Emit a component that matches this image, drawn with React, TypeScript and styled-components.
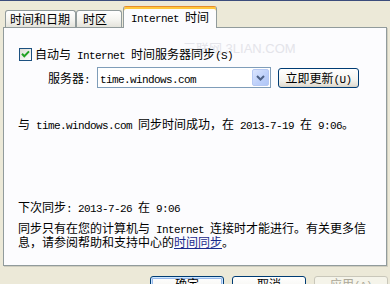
import React from "react";
import styled, { createGlobalStyle, css } from "styled-components";

const Global = createGlobalStyle`
  html, body { margin: 0; padding: 0; }
  body {
    width: 390px;
    height: 284px;
    overflow: hidden;
    background: #ECE9D8;
    font-family: "Noto Sans CJK SC", "Noto Sans", sans-serif;
    font-size: 12px;
    color: #000;
  }
`;

const Window = styled.div`
  width: 390px;
  height: 284px;
  box-sizing: border-box;
  border-top: 1px solid #3B4C7C;
  padding: 0 2px 0 3px;
  display: flex;
  flex-direction: column;
  overflow: hidden;
  & > * {
    flex-shrink: 0;
  }
`;

const TabStrip = styled.div`
  display: flex;
  align-items: flex-end;
  height: 21px;
  margin-top: 5px;
  padding-left: 2px;
  position: relative;
  z-index: 1;
`;

const Tab = styled.div<{ $w: number; $pl: number; $active?: boolean }>`
  box-sizing: border-box;
  width: ${(p) => p.$w}px;
  padding-left: ${(p) => p.$pl}px;
  padding-top: 1px;
  height: 17px;
  border: 1px solid #919B9C;
  border-bottom: none;
  border-radius: 3px 3px 0 0;
  background: linear-gradient(#ffffff, #f4f4f0 55%, #e4e3db);
  line-height: 14px;
  white-space: nowrap;
  ${(p) =>
    p.$active &&
    css`
      height: 22px;
      margin-left: 1px;
      margin-bottom: -1px;
      padding-top: 3px;
      background: #fcfcfe;
      border-top: 1px solid #e68b2c;
      box-shadow: inset 0 2px 0 #ffc83c;
    `}
`;

const Panel = styled.div`
  box-sizing: border-box;
  width: 384px;
  height: 239px;
  border: 1px solid #919b9c;
  background: #fcfcfe;
  padding: 20px 14px 17px 14px;
  display: flex;
  flex-direction: column;
  position: relative;
  box-shadow: 1px 1px 0 #d0cebf;
`;

const Watermark = styled.div`
  position: absolute;
  left: 179px;
  top: 10px;
  font-family: "Liberation Sans", "Noto Sans CJK SC", sans-serif;
  font-size: 13px;
  color: #e4e4ea;
  white-space: nowrap;
  pointer-events: none;
`;

const CheckRow = styled.label`
  display: flex;
  align-items: center;
  gap: 3px;
  height: 13px;
  margin-left: 1px;
  line-height: 12px;
  position: relative;
`;

const ServerRow = styled.div`
  display: flex;
  align-items: flex-start;
  margin-top: 6px;
  padding-left: 30px;
`;

const FieldLabel = styled.span`
  line-height: 21px;
  margin-right: 7px;
`;

const Combo = styled.div`
  box-sizing: border-box;
  width: 174px;
  height: 21px;
  border: 1px solid #7f9db9;
  background: #fff;
  display: flex;
  align-items: stretch;
  padding-left: 2px;
`;

const ComboText = styled.span`
  flex: 1;
  line-height: 19px;
`;

const DropButton = styled.div`
  box-sizing: border-box;
  width: 17px;
  margin: 1px 1px 1px 0;
  border: 1px solid #b5c8f3;
  border-radius: 2px;
  background: linear-gradient(135deg, #dbe5fd, #bccffa 60%, #b0c6f6);
  display: flex;
  align-items: center;
  justify-content: center;
`;

const PushButton = styled.button<{ $w: number; $h: number; $default?: boolean; $disabled?: boolean }>`
  box-sizing: border-box;
  width: ${(p) => p.$w}px;
  height: ${(p) => p.$h}px;
  border: 1px solid #003c74;
  border-radius: 3px;
  background: linear-gradient(#ffffff, #f5f4ef 60%, #e3e0d6 90%, #d6d0c5);
  font-family: "Noto Sans CJK SC", sans-serif;
  font-size: 12px;
  color: #000;
  padding: 0;
  line-height: 14px;
  white-space: nowrap;
  ${(p) =>
    p.$default &&
    css`
      box-shadow: inset 0 0 0 1px #cee7ff, inset 0 0 0 2px #98b8ea;
    `}
  ${(p) =>
    p.$disabled &&
    css`
      border-color: #c9c7ba;
      background: #f5f4ea;
      color: #aca899;
    `}
`;

const UpdateButton = styled(PushButton)`
  margin-left: 7px;
  margin-top: 1px;
  line-height: 18px;
`;

const TextLine = styled.div<{ $mt?: number }>`
  line-height: 12px;
  margin-top: ${(p) => p.$mt ?? 0}px;
  white-space: nowrap;
`;

const BottomGroup = styled.div`
  margin-top: auto;
`;

const Para = styled.div`
  margin-top: 7px;
  width: 354px;
  line-height: 12px;
`;

const Link = styled.span`
  color: #1a2a8c;
  text-decoration: underline;
  text-underline-offset: 1px;
`;

const Latin = styled.span`
  font-family: "Liberation Mono", "DejaVu Sans Mono", monospace;
  font-size: 11px;
  letter-spacing: -0.6px;
  white-space: pre;
`;

const ButtonRow = styled.div`
  display: flex;
  justify-content: flex-end;
  gap: 8px;
  margin-top: 10px;
`;

const DialogButton = styled(PushButton)`
  padding: 0 0 8px 0;
  line-height: 14px;
  text-align: center;
  display: block;
`;

const M: React.FC<{ t: string }> = ({ t }) => {
  const parts = t.split(/([\x20-\x7E]+)/).filter((s) => s.length > 0);
  return (
    <>
      {parts.map((s, i) =>
        /^[\x20-\x7E]+$/.test(s) ? <Latin key={i}>{s}</Latin> : <React.Fragment key={i}>{s}</React.Fragment>
      )}
    </>
  );
};

const CheckIcon = () => (
  <svg width="13" height="13" viewBox="0 0 13 13">
    <defs>
      <linearGradient id="cbg" x1="0" y1="0" x2="1" y2="1">
        <stop offset="0" stopColor="#dcdcd3" />
        <stop offset="1" stopColor="#ffffff" />
      </linearGradient>
    </defs>
    <rect x="0.5" y="0.5" width="12" height="12" fill="url(#cbg)" stroke="#1c5180" />
    <path d="M3 5.8 L5.3 8.2 L10 3.4" stroke="#21a121" strokeWidth="2" fill="none" />
  </svg>
);

const Chevron = () => (
  <svg width="9" height="6" viewBox="0 0 9 6">
    <path d="M1 1 L4.5 4.5 L8 1" stroke="#4d6185" strokeWidth="2" fill="none" />
  </svg>
);

export default function App() {
  return (
    <>
      <Global />
      <Window>
        <TabStrip>
          <Tab $w={71} $pl={4}>时间和日期</Tab>
          <Tab $w={46} $pl={6}>时区</Tab>
          <Tab $w={94} $pl={7} $active>
            <M t="Internet 时间" />
          </Tab>
        </TabStrip>
        <Panel>
          <Watermark>三联网 3LIAN.COM</Watermark>
          <CheckRow>
            <CheckIcon />
            <span>
              <M t="自动与 Internet 时间服务器同步(S)" />
            </span>
          </CheckRow>
          <ServerRow>
            <FieldLabel>
              <M t="服务器:" />
            </FieldLabel>
            <Combo>
              <ComboText>
                <M t="time.windows.com" />
              </ComboText>
              <DropButton>
                <Chevron />
              </DropButton>
            </Combo>
            <UpdateButton $w={81} $h={20}>
              <M t="立即更新(U)" />
            </UpdateButton>
          </ServerRow>
          <TextLine $mt={27}>
            <M t="与 time.windows.com 同步时间成功，在 2013-7-19 在 9:06。" />
          </TextLine>
          <BottomGroup>
            <TextLine>
              <M t="下次同步: 2013-7-26 在 9:06" />
            </TextLine>
            <Para>
              <M t="同步只有在您的计算机与 Internet 连接时才能进行。有关更多信息，请参阅帮助和支持中心的" />
              <Link>时间同步</Link>。
            </Para>
          </BottomGroup>
        </Panel>
        <ButtonRow>
          <DialogButton $w={74} $h={23} $default>确定</DialogButton>
          <DialogButton $w={74} $h={23}>取消</DialogButton>
          <DialogButton $w={74} $h={23} $disabled>
            <M t="应用(A)" />
          </DialogButton>
        </ButtonRow>
      </Window>
    </>
  );
}
